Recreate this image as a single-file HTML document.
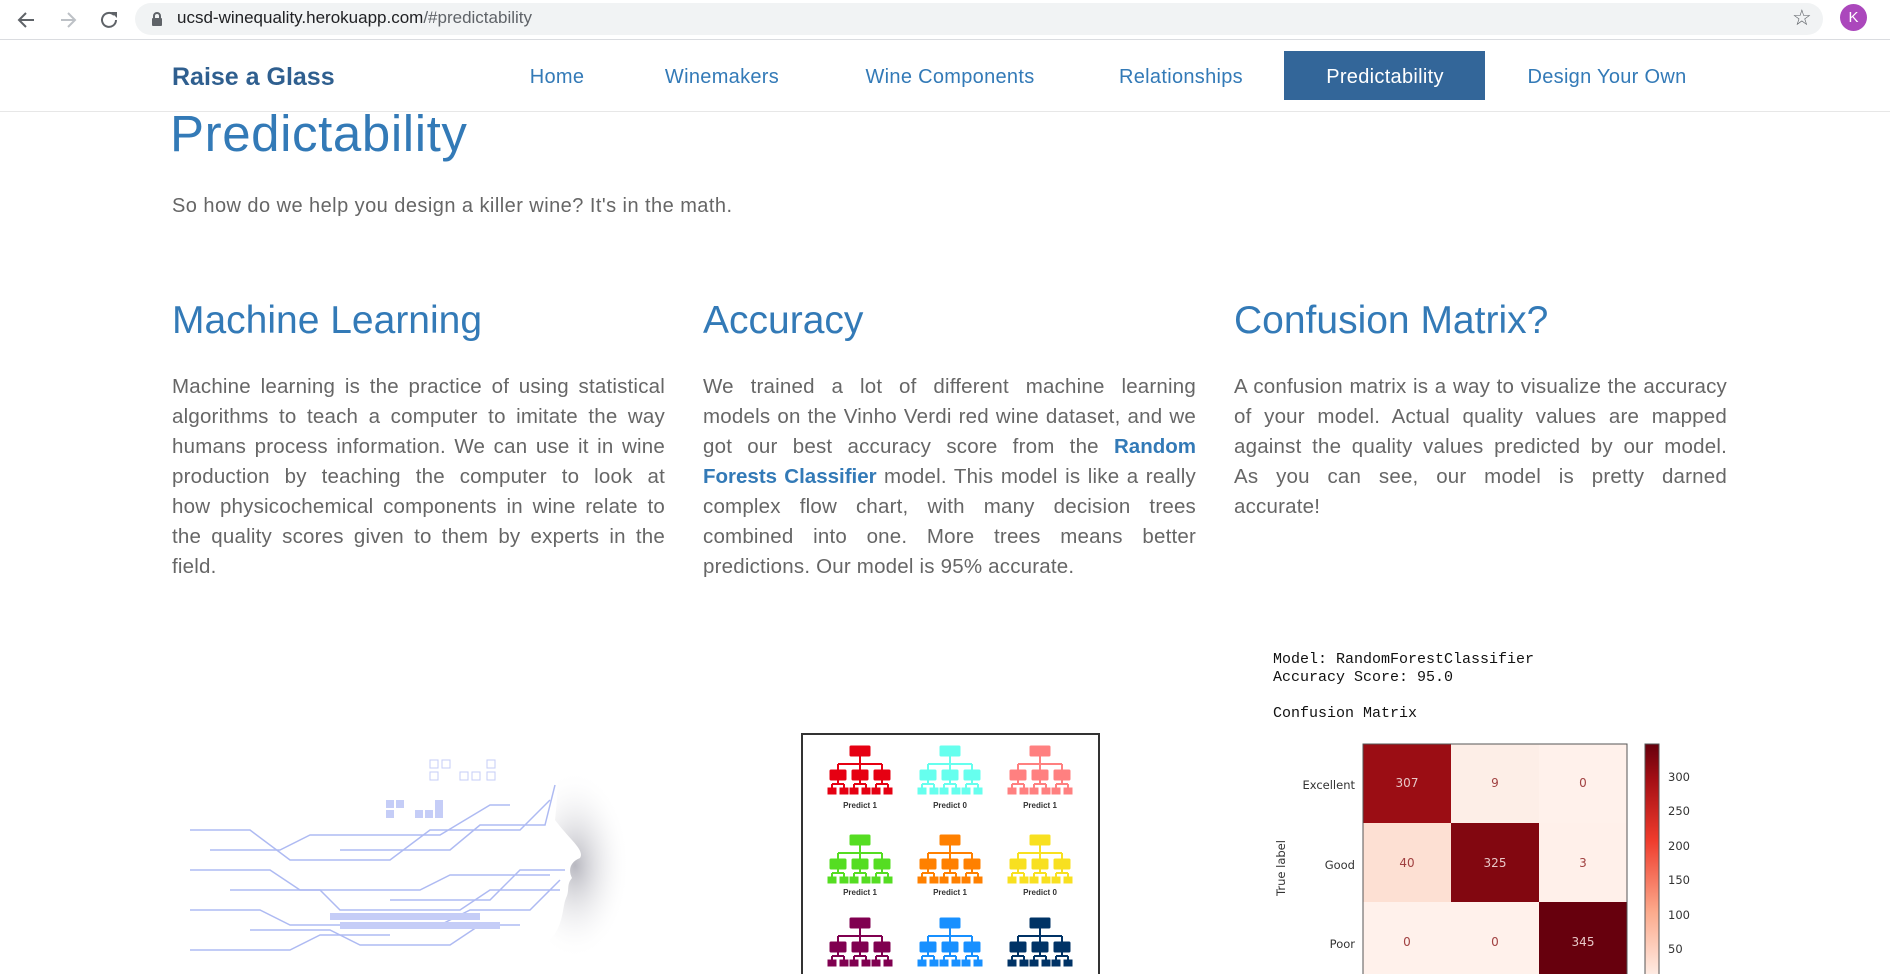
<!DOCTYPE html>
<html><head><meta charset="utf-8"><style>
*{margin:0;padding:0;box-sizing:border-box}
html{width:1890px;height:974px;overflow:hidden}
body{width:1890px;height:974px;overflow:hidden;background:#fff;font-family:"Liberation Sans",sans-serif;position:relative;color:#666}
.abs{position:absolute}
.bar{left:0;top:0;width:1890px;height:40px;background:#fff;border-bottom:1px solid #dadce0}
.pill{left:135px;top:3px;width:1688px;height:32px;border-radius:16px;background:#f1f3f4}
.url{left:177px;top:8px;font-size:17px;color:#202124}
.url span{color:#5f6368}
.nav{left:0;top:41px;width:1890px;height:71px;border-bottom:1px solid #e7e7e7}
.brand{left:172px;top:63px;font-size:25px;font-weight:bold;color:#2f5f8f}
.ni{top:66px;font-size:20px;color:#337ab7;transform:translateX(-50%);white-space:nowrap;letter-spacing:0.3px}
.act{left:1284px;top:51px;width:201px;height:49px;background:#336699}
h1{position:absolute;left:170px;top:104px;font-size:51px;font-weight:normal;color:#337ab7;letter-spacing:0.6px}
.sub{left:172px;top:195px;font-size:20px;letter-spacing:0.45px}
h2{position:absolute;top:299px;font-size:39px;font-weight:normal;color:#337ab7;letter-spacing:0px}
.p{top:372px;width:493px;font-size:20.5px;line-height:30px;letter-spacing:0.2px}
.p span{display:block;white-space:nowrap;text-align:justify;text-align-last:justify}
.p span.l{text-align-last:left}
.p b{color:#337ab7;letter-spacing:0}
.mono{font-family:"Liberation Mono",monospace;font-size:15px;color:#111;line-height:18px}
</style></head><body>
<div class="abs bar"></div>
<div class="abs pill"></div>
<svg class="abs" style="left:14px;top:8px" width="130" height="24" viewBox="0 0 130 24">
<path d="M20 12H6M12 5l-7 7 7 7" stroke="#5f6368" stroke-width="2" fill="none"/>
<path d="M47 12h14M54 5l7 7-7 7" stroke="#bdc1c6" stroke-width="2" fill="none"/>
<path d="M100 7a7 7 0 1 0 2 5" stroke="#5f6368" stroke-width="2" fill="none"/><path d="M97 4h6v6z" fill="#5f6368"/>
</svg>
<svg class="abs" style="left:151px;top:11px" width="12" height="16"><rect x="1" y="7" width="10" height="8" rx="1" fill="#5f6368"/><path d="M3 7V5a3 3 0 0 1 6 0v2" stroke="#5f6368" stroke-width="2" fill="none"/></svg>
<div class="abs url">ucsd-winequality.herokuapp.com<span>/#predictability</span></div>
<div class="abs" style="left:1792px;top:5px;font-size:22px;color:#5f6368">☆</div>
<div class="abs" style="left:1840px;top:4px;width:27px;height:27px;border-radius:50%;background:#ab47bc;color:#fff;font-size:15px;text-align:center;line-height:27px">K</div>

<div class="abs nav"></div>
<div class="abs brand">Raise a Glass</div>
<div class="abs act"></div>
<div class="abs ni" style="left:557px">Home</div>
<div class="abs ni" style="left:722px">Winemakers</div>
<div class="abs ni" style="left:950px">Wine Components</div>
<div class="abs ni" style="left:1181px">Relationships</div>
<div class="abs ni" style="left:1385px;color:#fff">Predictability</div>
<div class="abs ni" style="left:1607px">Design Your Own</div>

<h1>Predictability</h1>
<div class="abs sub">So how do we help you design a killer wine? It's in the math.</div>

<h2 style="left:172px">Machine Learning</h2>
<h2 style="left:703px">Accuracy</h2>
<h2 style="left:1234px">Confusion Matrix?</h2>
<div class="abs p" style="left:172px"><span>Machine learning is the practice of using statistical</span><span>algorithms to teach a computer to imitate the way</span><span>humans process information. We can use it in wine</span><span>production by teaching the computer to look at</span><span>how physicochemical components in wine relate to</span><span>the quality scores given to them by experts in the</span><span class="l">field.</span></div>
<div class="abs p" style="left:703px"><span>We trained a lot of different machine learning</span><span>models on the Vinho Verdi red wine dataset, and we</span><span>got our best accuracy score from the <b>Random</b></span><span><b>Forests Classifier</b> model. This model is like a really</span><span>complex flow chart, with many decision trees</span><span>combined into one. More trees means better</span><span class="l">predictions. Our model is 95% accurate.</span></div>
<div class="abs p" style="left:1234px"><span>A confusion matrix is a way to visualize the accuracy</span><span>of your model. Actual quality values are mapped</span><span>against the quality values predicted by our model.</span><span>As you can see, our model is pretty darned</span><span class="l">accurate!</span></div>

<!-- AI face -->
<svg class="abs" style="left:190px;top:740px" width="440" height="234" viewBox="0 0 440 234">
<defs><radialGradient id="sh" cx="0.5" cy="0.5" r="0.5"><stop offset="0" stop-color="#b8b8c0"/><stop offset="1" stop-color="#fff" stop-opacity="0"/></radialGradient></defs>
<ellipse cx="385" cy="125" rx="55" ry="95" fill="url(#sh)"/>
<path d="M300 0 L370 0 C368 30 368 55 365 80 C380 100 395 110 390 118 C380 122 378 130 382 138 C376 145 380 150 376 158 C372 168 374 185 360 200 C340 210 310 205 300 205 Z" fill="#fff"/>
<g stroke="#9aaaf0" stroke-width="1.5" fill="none" opacity="0.8">
<path d="M0 90H60L100 120H200L240 90H330L360 60"/><path d="M20 110H90L120 95H250L300 65H320"/><path d="M0 130H80L110 150H230L260 135H360"/><path d="M40 150H130L150 170H270L300 150H370"/><path d="M0 170H70L100 185H250L280 170H340L370 140"/><path d="M60 190H140L170 205H260L290 185H330"/><path d="M0 210H100L130 195H200"/><path d="M150 110H260L290 85H355L365 45"/><path d="M200 160H300L330 130H375"/>
</g>
<g fill="#c5cdf7"><rect x="196" y="60" width="8" height="8"/><rect x="206" y="60" width="8" height="8"/><rect x="225" y="70" width="8" height="8"/><rect x="235" y="70" width="8" height="8"/><rect x="245" y="60" width="8" height="18"/><rect x="196" y="70" width="8" height="8"/>
<rect x="140" y="173" width="150" height="7"/><rect x="150" y="182" width="160" height="7"/></g>
<g stroke="#c5cdf7" fill="none"><rect x="240" y="20" width="8" height="8"/><rect x="252" y="20" width="8" height="8"/><rect x="240" y="32" width="8" height="8"/><rect x="270" y="32" width="8" height="8"/><rect x="282" y="32" width="8" height="8"/><rect x="297" y="20" width="8" height="8"/><rect x="297" y="32" width="8" height="8"/></g>
</svg>

<!-- trees -->
<div class="abs" style="left:801px;top:733px;width:299px;height:250px;border:2px solid #333;border-bottom:none;background:#fff"></div>
<svg class="abs" style="left:803px;top:735px" width="295" height="239" viewBox="0 0 295 239">
<defs><g id="t"><rect x="-10" y="0" width="20" height="10" rx="1"/><path d="M0 10v8M-22 18H22M-22 18v6M0 18v6M22 18v6M-22 34v4M0 34v4M22 34v4M-28 38h12M-6 38h12M16 38h12M-28 38v4M-16 38v4M-6 38v4M6 38v4M16 38v4M28 38v4" stroke-width="2" fill="none" stroke="inherit"/><rect x="-30" y="24" width="16" height="10" rx="1"/><rect x="-8" y="24" width="16" height="10" rx="1"/><rect x="14" y="24" width="16" height="10" rx="1"/><g><rect x="-32" y="42" width="8" height="6"/><rect x="-20" y="42" width="8" height="6"/><rect x="-10" y="42" width="8" height="6"/><rect x="2" y="42" width="8" height="6"/><rect x="12" y="42" width="8" height="6"/><rect x="24" y="42" width="8" height="6"/></g></g></defs>
<g font-family="Liberation Sans" font-weight="bold" font-size="8" fill="#333" text-anchor="middle">
<use href="#t" x="57" y="11" fill="#e60012" stroke="#e60012"/><text x="57" y="73">Predict 1</text>
<use href="#t" x="147" y="11" fill="#66ffee" stroke="#66ffee"/><text x="147" y="73">Predict 0</text>
<use href="#t" x="237" y="11" fill="#ff8080" stroke="#ff8080"/><text x="237" y="73">Predict 1</text>
<use href="#t" x="57" y="100" fill="#55dd22" stroke="#55dd22"/><text x="57" y="160">Predict 1</text>
<use href="#t" x="147" y="100" fill="#ff8000" stroke="#ff8000"/><text x="147" y="160">Predict 1</text>
<use href="#t" x="237" y="100" fill="#f8e020" stroke="#f8e020"/><text x="237" y="160">Predict 0</text>
<use href="#t" x="57" y="183" fill="#800050" stroke="#800050"/>
<use href="#t" x="147" y="183" fill="#1890ff" stroke="#1890ff"/>
<use href="#t" x="237" y="183" fill="#003366" stroke="#003366"/>
</g></svg>

<!-- confusion matrix -->
<div class="abs mono" style="left:1273px;top:651px">Model: RandomForestClassifier<br>Accuracy Score: 95.0<br><br>Confusion Matrix</div>
<svg class="abs" style="left:1270px;top:740px" width="460" height="234" viewBox="0 0 460 234">
<g font-family="DejaVu Sans" font-size="12">
<rect x="93" y="4" width="88" height="79" fill="#9b0d14"/><rect x="181" y="4" width="88" height="79" fill="#fdeee7"/><rect x="269" y="4" width="88" height="79" fill="#fff1eb"/>
<rect x="93" y="83" width="88" height="79" fill="#fde0d3"/><rect x="181" y="83" width="88" height="79" fill="#820710"/><rect x="269" y="83" width="88" height="79" fill="#fff0ea"/>
<rect x="93" y="162" width="88" height="79" fill="#fff1eb"/><rect x="181" y="162" width="88" height="79" fill="#fff1eb"/><rect x="269" y="162" width="88" height="79" fill="#67000d"/>
<rect x="93" y="4" width="264" height="240" fill="none" stroke="#555"/>
<g text-anchor="middle" fill="#e8c8c8"><text x="137" y="47">307</text><text x="225" y="127">325</text><text x="313" y="206">345</text></g>
<g text-anchor="middle" fill="#a04040"><text x="225" y="47">9</text><text x="313" y="47">0</text><text x="137" y="127">40</text><text x="313" y="127">3</text><text x="137" y="206">0</text><text x="225" y="206">0</text></g>
<g text-anchor="end" fill="#333" font-size="11.5"><text x="85" y="49">Excellent</text><text x="85" y="129">Good</text><text x="85" y="208">Poor</text></g>
<text transform="translate(15,128) rotate(-90)" text-anchor="middle" font-size="11.5" fill="#333">True label</text>
<defs><linearGradient id="cb" x1="0" y1="1" x2="0" y2="0"><stop offset="0" stop-color="#fff5f0"/><stop offset="0.3" stop-color="#fcaa8c"/><stop offset="0.6" stop-color="#ef3b2c"/><stop offset="0.85" stop-color="#a50f15"/><stop offset="1" stop-color="#67000d"/></linearGradient></defs>
<rect x="375" y="4" width="14" height="240" fill="url(#cb)" stroke="#555"/>
<g fill="#333" font-size="11.5"><text x="398" y="41">300</text><text x="398" y="75">250</text><text x="398" y="110">200</text><text x="398" y="144">150</text><text x="398" y="179">100</text><text x="398" y="213">50</text></g>
</g></svg>
</body></html>
